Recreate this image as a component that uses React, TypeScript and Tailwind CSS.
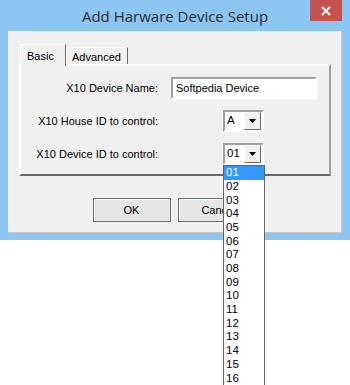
import React from "react";

const font = { fontFamily: '"Liberation Sans", Arial, sans-serif' };

const items = ["01", "02", "03", "04", "05", "06", "07", "08", "09", "10", "11", "12", "13", "14", "15", "16"];

const ArrowButton = () => (
  <div className="flex h-[18px] w-[17px] items-center justify-center border border-t-white border-l-white border-r-[#696969] border-b-[#696969] bg-[#f0f0f0]">
    <svg width="7" height="4" viewBox="0 0 7 4">
      <path d="M0 0h7L3.5 4z" fill="#000" />
    </svg>
  </div>
);

const ComboBox = ({ value, open }: { value: string; open?: boolean }) => (
  <div className="relative">
    <div className="flex h-[22px] w-[41px] items-center justify-between border-2 border-t-[#a0a0a0] border-l-[#a0a0a0] border-r-white border-b-white bg-white pl-[2px] pr-[1px]">
      <span className="text-[11.5px] leading-none text-black">{value}</span>
      <ArrowButton />
    </div>
    {open && (
      <ul className="absolute left-0 top-full z-10 w-[42px] border border-[#646464] bg-white">
        {items.map((it, i) => (
          <li
            key={it}
            className={
              i === 0
                ? "flex h-[13.7px] items-center bg-[#3399ff] pl-[2px] text-[11.5px] text-white"
                : "flex h-[13.7px] items-center pl-[2px] text-[11.5px] text-black"
            }
          >
            {it}
          </li>
        ))}
      </ul>
    )}
  </div>
);

export default function App() {
  return (
    <div className="w-[350px] h-[385px] bg-white" style={font}>
      <div className="flex h-[240px] w-[350px] flex-col bg-[#8dc6f3] px-[8px] pb-[7px]">
        {/* Title bar */}
        <div className="grid h-[31px] grid-cols-[1fr_auto_1fr] items-start">
          <div />
          <div
            className="pt-[6px] text-[15px] leading-[20px] text-[#2b2b2b]"
            style={{ fontFamily: '"Open Sans", "Noto Sans", sans-serif' }}
          >
            Add Harware Device Setup
          </div>
          <div className="flex justify-end">
            <div className="flex h-[21px] w-[32px] items-center justify-center bg-[#c75050]">
              <svg width="10" height="10" viewBox="0 0 10 10">
                <path d="M1 1l8 8M9 1l-8 8" stroke="#fff" strokeWidth="2" />
              </svg>
            </div>
          </div>
        </div>

        {/* Client area */}
        <div className="flex flex-1 flex-col border-r border-b border-[#c8c8c8] bg-[#f0f0f0] pl-[11px] pr-[11px] pt-[13px]">
          {/* Tabs */}
          <div className="flex items-end pl-[1px]">
            <div className="relative z-[1] -mb-[2px] flex h-[22px] w-[46px] items-start border border-b-0 border-t-white border-l-white border-r-[#696969] bg-[#f0f0f0] pl-[6px] pt-[3px] text-[11px] text-black">
              Basic
            </div>
            <div className="flex h-[17px] w-[62px] items-start border border-b-0 border-t-white border-l-white border-r-[#696969] pl-[5px] pt-[1px] text-[11px] text-black">
              Advanced
            </div>
          </div>

          {/* Tab panel */}
          <div className="flex h-[112px] w-[312px] flex-col gap-[11px] border-2 border-t-white border-l-white border-r-[#a0a0a0] border-b-[#696969] pt-[11px]">
            <div className="grid grid-cols-[137px_1fr] items-center gap-x-[13px]">
              <span className="text-right text-[11px] text-black">X10 Device Name:</span>
              <div className="flex h-[22px] w-[146px] items-center border-2 border-t-[#a0a0a0] border-l-[#a0a0a0] border-r-white border-b-white bg-white pl-[3px] text-[11px] text-black">
                Softpedia Device
              </div>
            </div>
            <div className="grid grid-cols-[137px_1fr] items-center gap-x-[13px]">
              <span className="text-right text-[11px] text-black">X10 House ID to control:</span>
              <div className="ml-[52px]">
                <ComboBox value="A" />
              </div>
            </div>
            <div className="grid grid-cols-[137px_1fr] items-center gap-x-[13px]">
              <span className="text-right text-[11px] text-black">X10 Device ID to control:</span>
              <div className="ml-[52px]">
                <ComboBox value="01" open />
              </div>
            </div>
          </div>

          {/* Buttons */}
          <div className="mt-[22px] flex justify-center gap-[7px] pr-[1px]">
            <button className="h-[24px] w-[78px] border border-[#707070] bg-[#e6e6e6] text-[11px] text-black shadow-[inset_1px_1px_0_#fff]">
              OK
            </button>
            <button className="h-[24px] w-[78px] border border-[#707070] bg-[#e6e6e6] pl-[4px] text-[11px] text-black shadow-[inset_1px_1px_0_#fff]">
              Cancel
            </button>
          </div>
        </div>
      </div>
    </div>
  );
}
